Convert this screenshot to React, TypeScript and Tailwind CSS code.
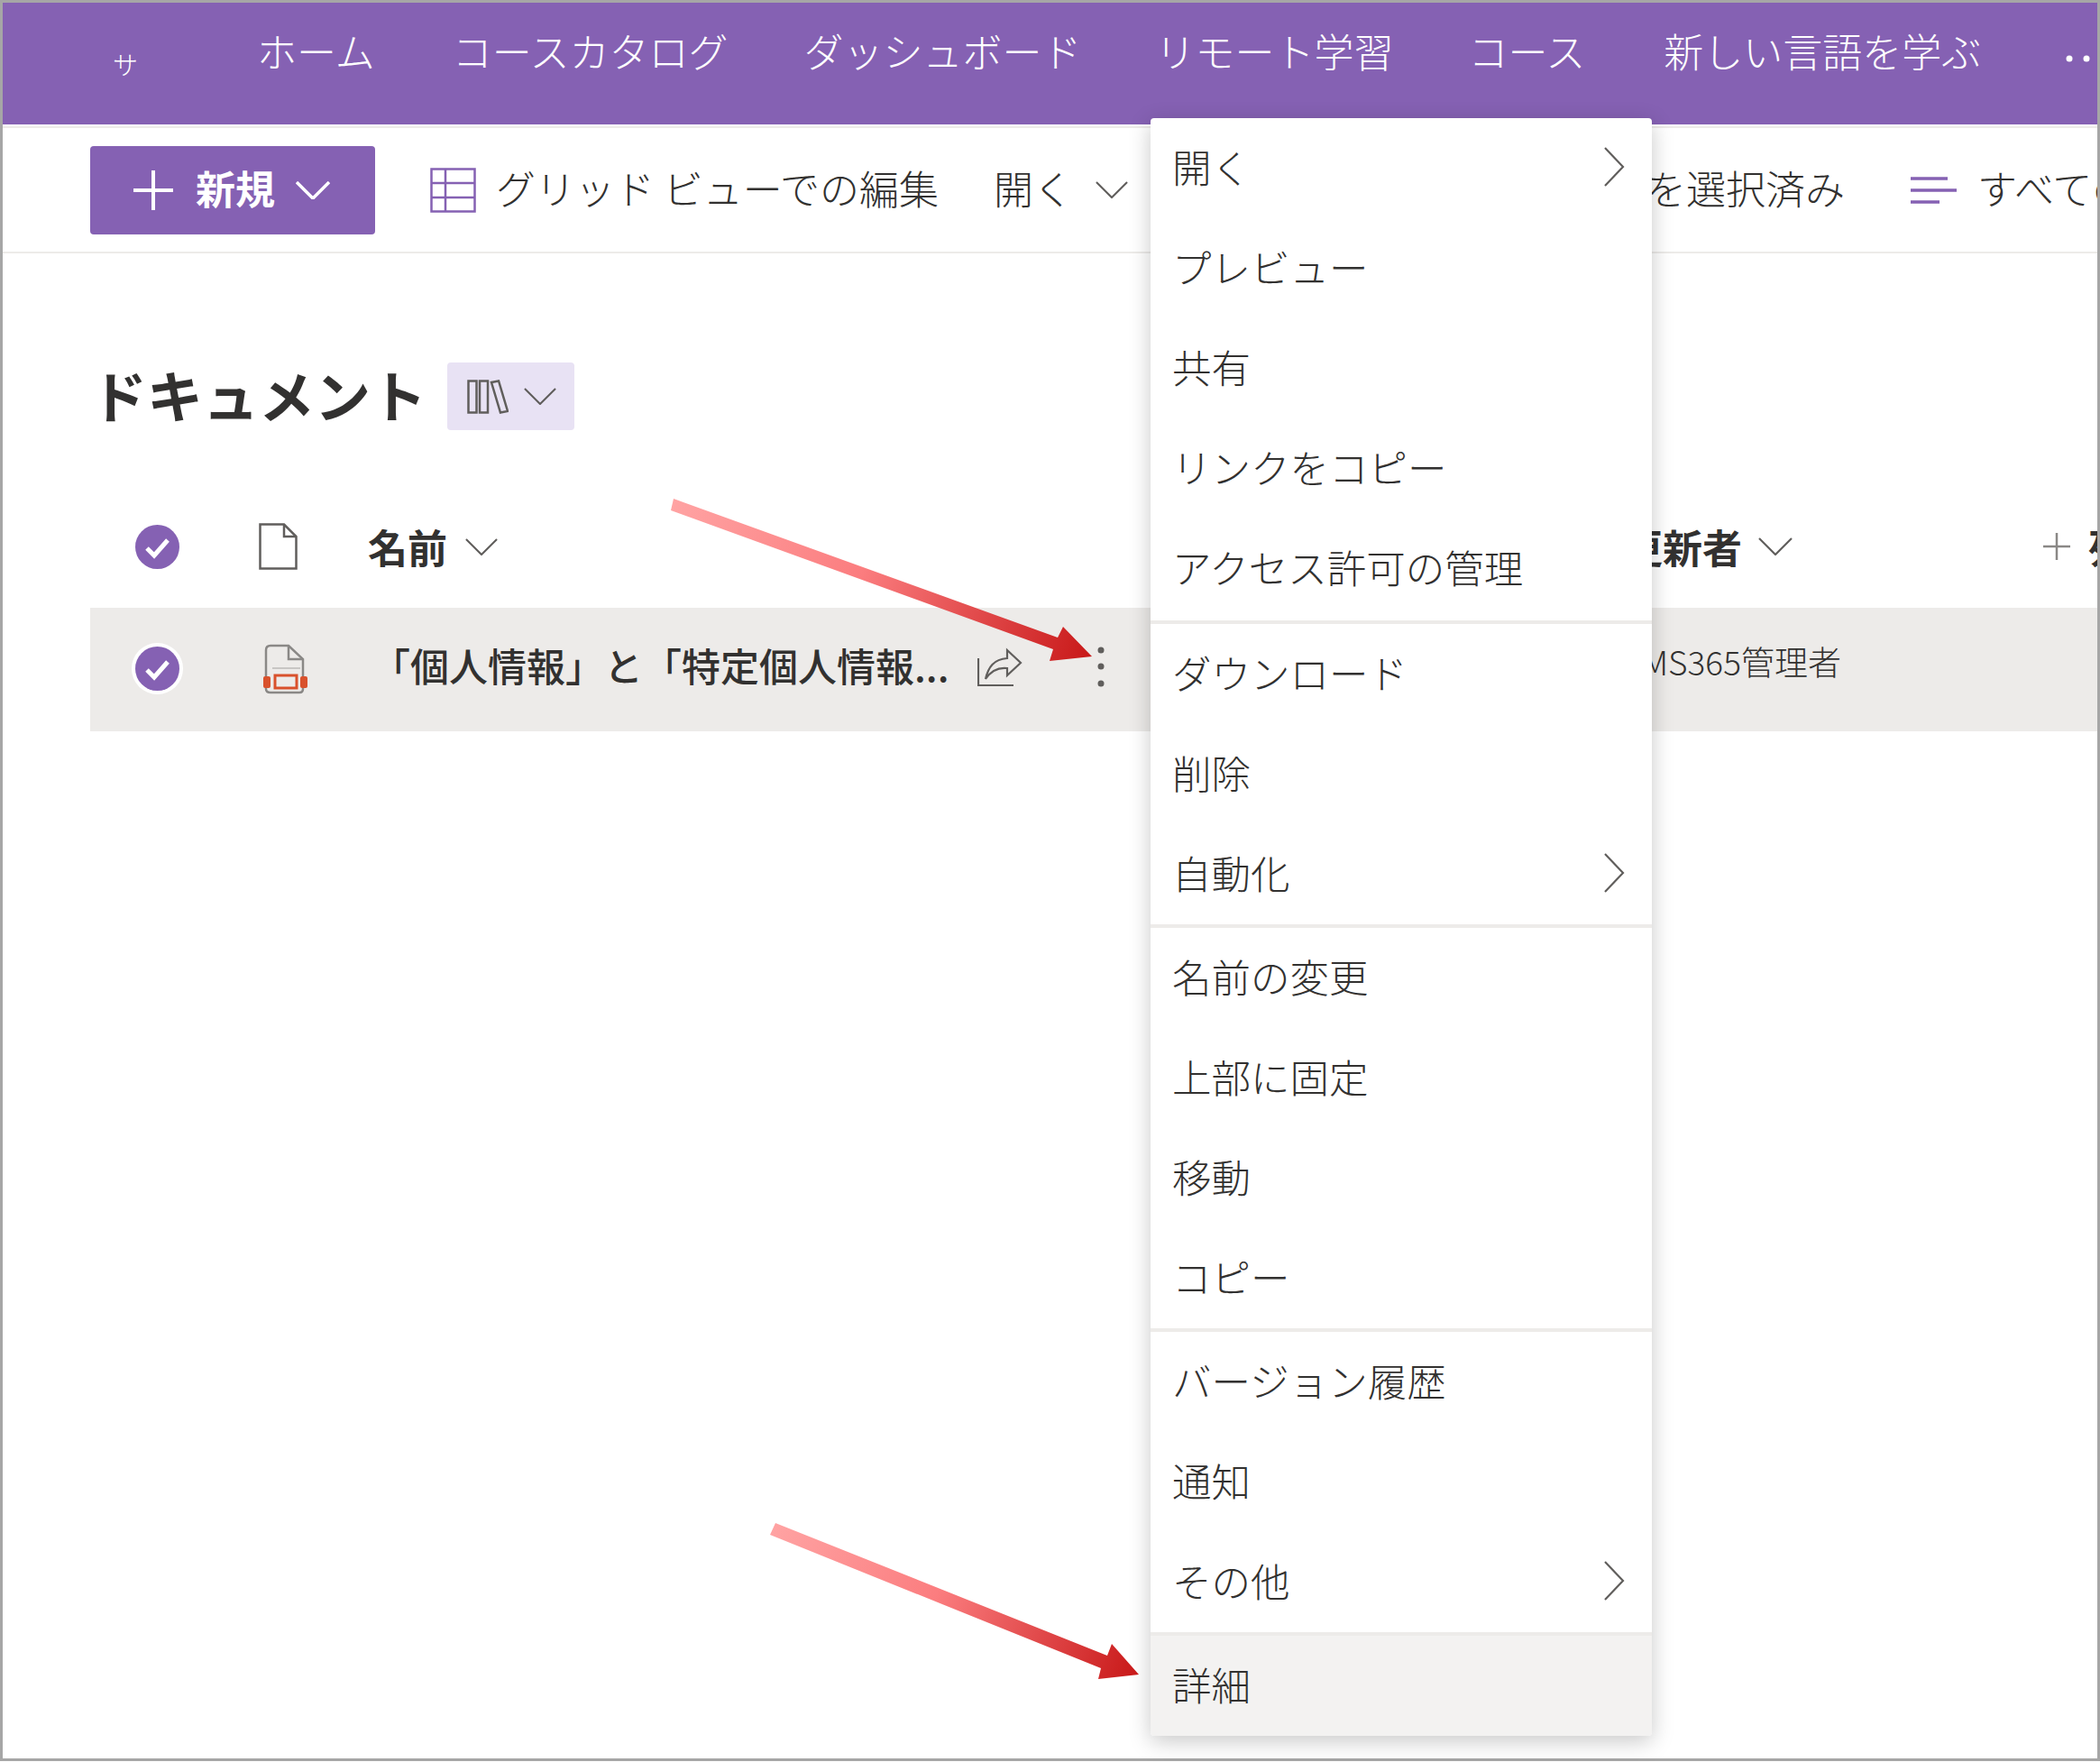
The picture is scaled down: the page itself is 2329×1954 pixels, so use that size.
import React, { FC } from 'react';

const Chevron: FC<{ className?: string; stroke?: string; width?: number }> = ({ className, stroke = '#605e5c', width = 2.2 }) => (
    <svg viewBox="0 0 38 20" className={className} fill="none" stroke={stroke} strokeWidth={width}>
        <polyline points="1,1 19,19 37,1" />
    </svg>
);

const MenuChevron: FC = () => (
    <svg viewBox="0 0 24 44" className="w-[24px] h-[44px]" fill="none" stroke="#605e5c" strokeWidth={2.2}>
        <polyline points="2,1 22,22 2,43" />
    </svg>
);

const CheckCircle: FC = () => (
    <svg viewBox="0 0 49 49" className="w-[49px] h-[49px]">
        <circle cx="24.5" cy="24.5" r="24.5" fill="#8561b3" />
        <polyline points="13,26 21,34 36,17" fill="none" stroke="#ffffff" strokeWidth={5} />
    </svg>
);

const NAV_ITEMS = [
    { label: 'ホーム', ml: 'ml-[132px]' },
    { label: 'コースカタログ', ml: 'ml-[86px]' },
    { label: 'ダッシュボード', ml: 'ml-[84px]' },
    { label: 'リモート学習', ml: 'ml-[82px]' },
    { label: 'コース', ml: 'ml-[83px]' },
    { label: '新しい言語を学ぶ', ml: 'ml-[87px]' },
];

const MENU_GROUPS: { label: string; sub?: boolean; active?: boolean }[][] = [
    [{ label: '開く', sub: true }, { label: 'プレビュー' }, { label: '共有' }, { label: 'リンクをコピー' }, { label: 'アクセス許可の管理' }],
    [{ label: 'ダウンロード' }, { label: '削除' }, { label: '自動化', sub: true }],
    [{ label: '名前の変更' }, { label: '上部に固定' }, { label: '移動' }, { label: 'コピー' }],
    [{ label: 'バージョン履歴' }, { label: '通知' }, { label: 'その他', sub: true }],
    [{ label: '詳細', active: true }],
];

const App: FC = () => {
    return (
        <div className="relative w-[2329px] h-[1954px] bg-white overflow-hidden font-['Noto_Sans_CJK_JP',sans-serif] text-[#323130] font-light">
            <div className="w-[2329px] h-[1953px] border-[3px] border-[#a6a6a6] overflow-hidden">
                {/* Top nav */}
                <div className="h-[135px] bg-[#8561b3] text-white flex items-start pt-[23px] text-[44px] leading-[60px] whitespace-nowrap">
                    <span className="ml-[122px] mt-[15px] w-[28px] text-[28px] leading-[60px]">サ</span>
                    {NAV_ITEMS.map(item => (
                        <span key={item.label} className={item.ml}>{item.label}</span>
                    ))}
                    <svg viewBox="0 0 30 8" className="w-[30px] h-[8px] ml-[94px] mt-[35px]" fill="#ffffff">
                        <circle cx="4" cy="4" r="3.5" />
                        <circle cx="23" cy="4" r="3.5" />
                    </svg>
                </div>

                {/* Command bar */}
                <div className="mt-[2px] h-[141px] border-y-2 border-[#edebe9] flex items-center pl-[97px] text-[44px] whitespace-nowrap">
                    <button className="w-[316px] h-[98px] bg-[#8561b3] rounded-[4px] text-white flex items-center pl-[48px] shrink-0">
                        <svg viewBox="0 0 44 44" className="w-[44px] h-[44px]" stroke="#ffffff" strokeWidth={4}>
                            <path d="M22 0V44M0 22H44" />
                        </svg>
                        <span className="ml-[25px] font-bold leading-none pb-[6px]">新規</span>
                        <Chevron className="w-[38px] h-[20px] ml-[23px]" stroke="#ffffff" width={3.5} />
                    </button>
                    <svg viewBox="0 0 51 50" className="w-[51px] h-[50px] ml-[61px] shrink-0" fill="none" stroke="#8561b3" strokeWidth={2.5}>
                        <rect x="1.5" y="1.5" width="48" height="47" />
                        <path d="M17 1.5V48.5M1.5 17H49.5M1.5 33H49.5" />
                    </svg>
                    <span className="ml-[22px] leading-none pb-[6px]">グリッド ビューでの編集</span>
                    <span className="ml-[61px] leading-none pb-[6px]">開く</span>
                    <Chevron className="w-[36px] h-[19px] ml-[25px] shrink-0" />
                    <span className="ml-[575px] leading-none pb-[6px]">を選択済み</span>
                    <svg viewBox="0 0 52 30" className="w-[52px] h-[30px] ml-[73px] shrink-0" fill="none" stroke="#8561b3" strokeWidth={3.5}>
                        <path d="M0 2H41M0 15H51M0 28H32" />
                    </svg>
                    <span className="ml-[22px] leading-none pb-[6px]">すべての</span>
                </div>

                {/* Title */}
                <div className="pl-[97px]">
                    <div className="mt-[121px] flex items-center h-[75px]">
                        <h1 className="w-[396px] pl-[1px] pb-[6px] text-[62px] font-bold leading-none whitespace-nowrap">ドキュメント</h1>
                        <button className="w-[141px] h-[75px] bg-[#e8e2f4] rounded-[4px] flex items-center pl-[22px] shrink-0">
                            <svg viewBox="0 0 46 38" className="w-[46px] h-[38px]" fill="none" stroke="#605e5c" strokeWidth={2.5}>
                                <rect x="1.5" y="1.5" width="9" height="35" />
                                <rect x="14" y="1.5" width="9" height="35" />
                                <path d="M27 3L35 1.5L45 35L37 36.5Z" />
                            </svg>
                            <Chevron className="w-[36px] h-[19px] ml-[17px]" />
                        </button>
                    </div>

                    {/* Column header */}
                    <div className="mt-[61px] h-[136px] flex items-center text-[44px] font-bold whitespace-nowrap">
                        <div className="ml-[50px] shrink-0 w-[49px] h-[49px]"><CheckCircle /></div>
                        <svg viewBox="0 0 43 52" className="w-[43px] h-[52px] ml-[88px] shrink-0" fill="none" stroke="#605e5c" strokeWidth={2.5}>
                            <path d="M1.5 1.5H28L41.5 15V50.5H1.5Z" />
                            <path d="M28 1.5V15H41.5" />
                        </svg>
                        <span className="ml-[78px] leading-none">名前</span>
                        <Chevron className="w-[36px] h-[19px] ml-[20px] shrink-0" />
                        <span className="ml-[1248px] leading-none">更新者</span>
                        <Chevron className="w-[38px] h-[20px] ml-[18px] shrink-0" />
                        <svg viewBox="0 0 30 30" className="w-[30px] h-[30px] ml-[278px] shrink-0" stroke="#8a8886" strokeWidth={2.5}>
                            <path d="M15 0V30M0 15H30" />
                        </svg>
                        <span className="ml-[20px] leading-none font-bold">列</span>
                    </div>

                    {/* Selected row */}
                    <div className="h-[137px] bg-[#edebe9] flex items-center text-[43px] whitespace-nowrap">
                        <div className="ml-[46px] shrink-0 w-[57px] h-[57px] rounded-full bg-white flex items-center justify-center -mt-[3px]"><CheckCircle /></div>
                        <svg viewBox="0 0 50 56" className="w-[50px] h-[56px] ml-[88px] shrink-0 -mt-[2px]" fill="none">
                            <path d="M4 7Q4 2 9 2H29L45 17V50Q45 54 41 54H9Q4 54 4 50Z" stroke="#8a8886" strokeWidth={2.5} />
                            <path d="M29 2V17H45" stroke="#8a8886" strokeWidth={2.5} />
                            <path d="M11 27H42" stroke="#c8c6c4" strokeWidth={2} />
                            <rect x="14" y="35" width="24" height="14" stroke="#d9512c" strokeWidth={3} />
                            <rect x="1" y="36" width="8" height="13" rx="2" fill="#d9512c" />
                            <rect x="42" y="36" width="8" height="13" rx="2" fill="#d9512c" />
                        </svg>
                        <span className="ml-[71px] w-[650px] font-medium leading-none -mt-[10px]">「個人情報」と「特定個人情報...</span>
                        <svg viewBox="0 0 50 44" className="w-[50px] h-[44px] ml-[22px] shrink-0 -mt-[6px]" fill="none" stroke="#605e5c" strokeWidth={2.2}>
                            <path d="M1 12V42H40" />
                            <path d="M9 35C12 22 18 13 33 12V3L48 17L33 31V23C24 22 15 26 9 35Z" />
                        </svg>
                        <svg viewBox="0 0 8 46" className="w-[8px] h-[46px] ml-[83px] shrink-0 -mt-[6px]" fill="#605e5c">
                            <circle cx="4" cy="4" r="3.5" />
                            <circle cx="4" cy="22" r="3.5" />
                            <circle cx="4" cy="41" r="3.5" />
                        </svg>
                        <span className="ml-[596px] text-[37px] leading-none -mt-[19px]">MS365管理者</span>
                    </div>
                </div>
            </div>

            {/* Context menu */}
            <div className="absolute left-[1276px] top-[131px] w-[556px] bg-white rounded-[4px] shadow-[0_6px_24px_rgba(0,0,0,0.22)] overflow-hidden text-[43.5px] whitespace-nowrap">
                {MENU_GROUPS.map((group, i) => (
                    <div key={i} className={i === 0 ? 'pb-[2px]' : 'border-t-4 border-[#edebe9]'}>
                        {group.map(item => (
                            <div key={item.label} className={`h-[111px] flex items-center justify-between pl-[24px] pr-[30px] pb-[4px] ${item.active ? 'bg-[#f3f2f1]' : ''}`}>
                                <span className="leading-none">{item.label}</span>
                                {item.sub && <MenuChevron />}
                            </div>
                        ))}
                    </div>
                ))}
            </div>

            {/* Annotation arrows */}
            <svg className="absolute inset-0 w-[2329px] h-[1954px] pointer-events-none" viewBox="0 0 2329 1954">
                <defs>
                    <linearGradient id="arrowA" gradientUnits="userSpaceOnUse" x1="745" y1="560" x2="1211" y2="728">
                        <stop offset="0" stopColor="#ffa3a3" />
                        <stop offset="0.45" stopColor="#fb7d7f" />
                        <stop offset="1" stopColor="#c81818" />
                    </linearGradient>
                    <linearGradient id="arrowB" gradientUnits="userSpaceOnUse" x1="855" y1="1695" x2="1263" y2="1857">
                        <stop offset="0" stopColor="#ffa3a3" />
                        <stop offset="0.45" stopColor="#fb7d7f" />
                        <stop offset="1" stopColor="#c81818" />
                    </linearGradient>
                </defs>
                <polygon points="747,553 744,566 1168,720 1164,733 1211,728 1179,695 1173,707" fill="url(#arrowA)" />
                <polygon points="860,1689 854,1702 1221,1850 1218,1862 1263,1857 1233,1823 1228,1836" fill="url(#arrowB)" />
            </svg>
        </div>
    );
};

export default App;
